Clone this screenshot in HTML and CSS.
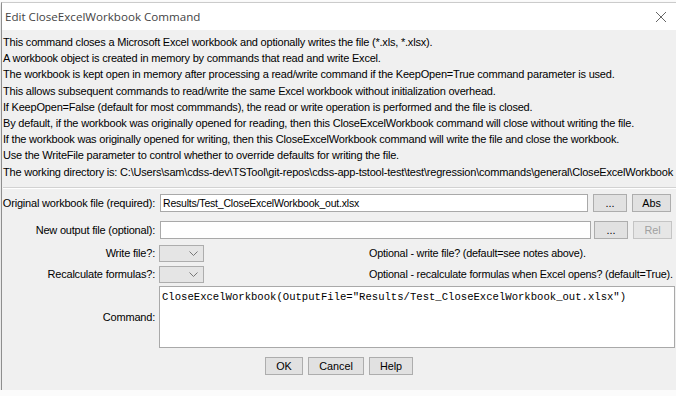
FILE: index.html
```html
<!DOCTYPE html>
<html lang="en">
<head>
<meta charset="UTF-8">
<title>Edit CloseExcelWorkbook Command</title>
<link rel="stylesheet" href="styles.css">
</head>
<body>
<div class="window">
    <div class="titlebar">
        <span class="title">Edit CloseExcelWorkbook Command</span>
        <svg class="close" width="12" height="12" viewBox="0 0 12 12">
            <path d="M1 1 L11 11 M11 1 L1 11" stroke="#666" stroke-width="1" fill="none"/>
        </svg>
    </div>
    <div class="content">
        <div class="notes">
            <div>This command closes a Microsoft Excel workbook and optionally writes the file (*.xls, *.xlsx).</div>
            <div>A workbook object is created in memory by commands that read and write Excel.</div>
            <div>The workbook is kept open in memory after processing a read/write command if the KeepOpen=True command parameter is used.</div>
            <div>This allows subsequent commands to read/write the same Excel workbook without initialization overhead.</div>
            <div>If KeepOpen=False (default for most commmands), the read or write operation is performed and the file is closed.</div>
            <div>By default, if the workbook was originally opened for reading, then this CloseExcelWorkbook command will close without writing the file.</div>
            <div>If the workbook was originally opened for writing, then this CloseExcelWorkbook command will write the file and close the workbook.</div>
            <div>Use the WriteFile parameter to control whether to override defaults for writing the file.</div>
            <div>The working directory is: C:\Users\sam\cdss-dev\TSTool\git-repos\cdss-app-tstool-test\test\regression\commands\general\CloseExcelWorkbook</div>
        </div>
        <div class="separator"></div>

        <div class="row row-1">
            <label class="label">Original workbook file (required):</label>
            <input class="field field-1" type="text" value="Results/Test_CloseExcelWorkbook_out.xlsx">
            <button class="btn btn-browse">...</button>
            <button class="btn btn-path">Abs</button>
        </div>
        <div class="row row-2">
            <label class="label">New output file (optional):</label>
            <input class="field field-2" type="text" value="">
            <button class="btn btn-browse">...</button>
            <button class="btn btn-path" disabled>Rel</button>
        </div>
        <div class="row row-3">
            <label class="label">Write file?:</label>
            <div class="combo-cell">
                <div class="combo">
                    <svg width="9" height="5" viewBox="0 0 9 5"><path d="M0.5 0.5 L4.5 4.5 L8.5 0.5" stroke="#777" fill="none"/></svg>
                </div>
            </div>
            <span class="hint">Optional - write file? (default=see notes above).</span>
        </div>
        <div class="row row-4">
            <label class="label">Recalculate formulas?:</label>
            <div class="combo-cell">
                <div class="combo">
                    <svg width="9" height="5" viewBox="0 0 9 5"><path d="M0.5 0.5 L4.5 4.5 L8.5 0.5" stroke="#777" fill="none"/></svg>
                </div>
            </div>
            <span class="hint">Optional - recalculate formulas when Excel opens? (default=True).</span>
        </div>
        <div class="row row-5">
            <label class="label">Command:</label>
            <textarea class="command" readonly>CloseExcelWorkbook(OutputFile="Results/Test_CloseExcelWorkbook_out.xlsx")</textarea>
        </div>

        <div class="buttons">
            <button class="btn btn-ok">OK</button>
            <button class="btn btn-cancel">Cancel</button>
            <button class="btn btn-help">Help</button>
        </div>
    </div>
</div>
</body>
</html>
```

FILE: styles.css
```css
body{
margin: 0;
background: #fbfbfb;
font-family: "Liberation Sans", Arial, sans-serif;
font-size: 11px;
color: #000;
overflow: hidden;
}

.window{
margin: 2px 0 0 1px;
height: 387px;
border-top: 1px solid #cbcbcb;
border-left: 1px solid #8e8e8e;
background: #f0f0f0;
box-shadow: 0 2px 3px rgba(0,0,0,0.18);
}

.titlebar{
height: 27px;
background: #fff;
display: flex;
align-items: center;
justify-content: space-between;
padding-left: 3px;
}

.title{
font-family: "Open Sans", "Noto Sans", sans-serif;
font-size: 11.6px;
color: #444;
}

.close{
margin-right: 9px;
}

.notes{
padding: 4px 0 0 1px;
line-height: 16.2px;
letter-spacing: -0.2px;
white-space: nowrap;
}

.separator{
margin-top: 7px;
margin-left: 1px;
border-top: 1px solid #d2d2d2;
border-bottom: 1px solid #fff;
}

.row{
display: flex;
align-items: center;
}

.row-1{ margin-top: 5px; height: 18px; }
.row-2{ margin-top: 9px; height: 18px; }
.row-3{ margin-top: 6px; height: 17px; }
.row-4{ margin-top: 4px; height: 17px; }
.row-5{ margin-top: 3px; height: 62px; }

.label{
width: 153px;
padding-right: 5px;
text-align: right;
letter-spacing: -0.2px;
white-space: nowrap;
}

.field{
box-sizing: border-box;
height: 18px;
border: 1px solid #a9a9a9;
background: #fff;
padding: 0 2px;
font-family: inherit;
font-size: 10.5px;
letter-spacing: -0.2px;
outline: none;
}

.field-1{ width: 428px; }
.field-2{ width: 431px; }

.btn{
box-sizing: border-box;
height: 18px;
border: 1px solid #adadad;
background: #e1e1e1;
font-family: inherit;
font-size: 10.8px;
color: #000;
padding: 0;
}

.btn-browse{
width: 34px;
margin-left: 5px;
}

.btn-path{
width: 39px;
margin-left: 5px;
}

.row-2 .btn-browse{ margin-left: 3px; }

.btn:disabled{
color: #a0a0a0;
background: #e6e6e6;
border-color: #c4c4c4;
}

.combo-cell{
width: 210px;
margin-left: -1px;
}

.combo{
box-sizing: border-box;
width: 45px;
height: 17px;
border: 1px solid #adadad;
background: #e5e5e5;
display: flex;
align-items: center;
justify-content: flex-end;
padding-right: 5px;
}

.hint{
font-size: 10.8px;
letter-spacing: -0.2px;
white-space: nowrap;
}

.command{
box-sizing: border-box;
width: 516px;
height: 62px;
margin-left: -1px;
border: 1px solid #a9a9a9;
background: #fff;
resize: none;
outline: none;
padding: 3px 2px;
font-family: "Liberation Mono", "Courier New", monospace;
font-size: 10.6px;
line-height: 14px;
overflow: hidden;
}

.buttons{
margin-top: 9px;
display: flex;
justify-content: center;
gap: 5px;
}

.btn-ok{ width: 38px; }
.btn-cancel{ width: 56px; }
.btn-help{ width: 44px; }
```
